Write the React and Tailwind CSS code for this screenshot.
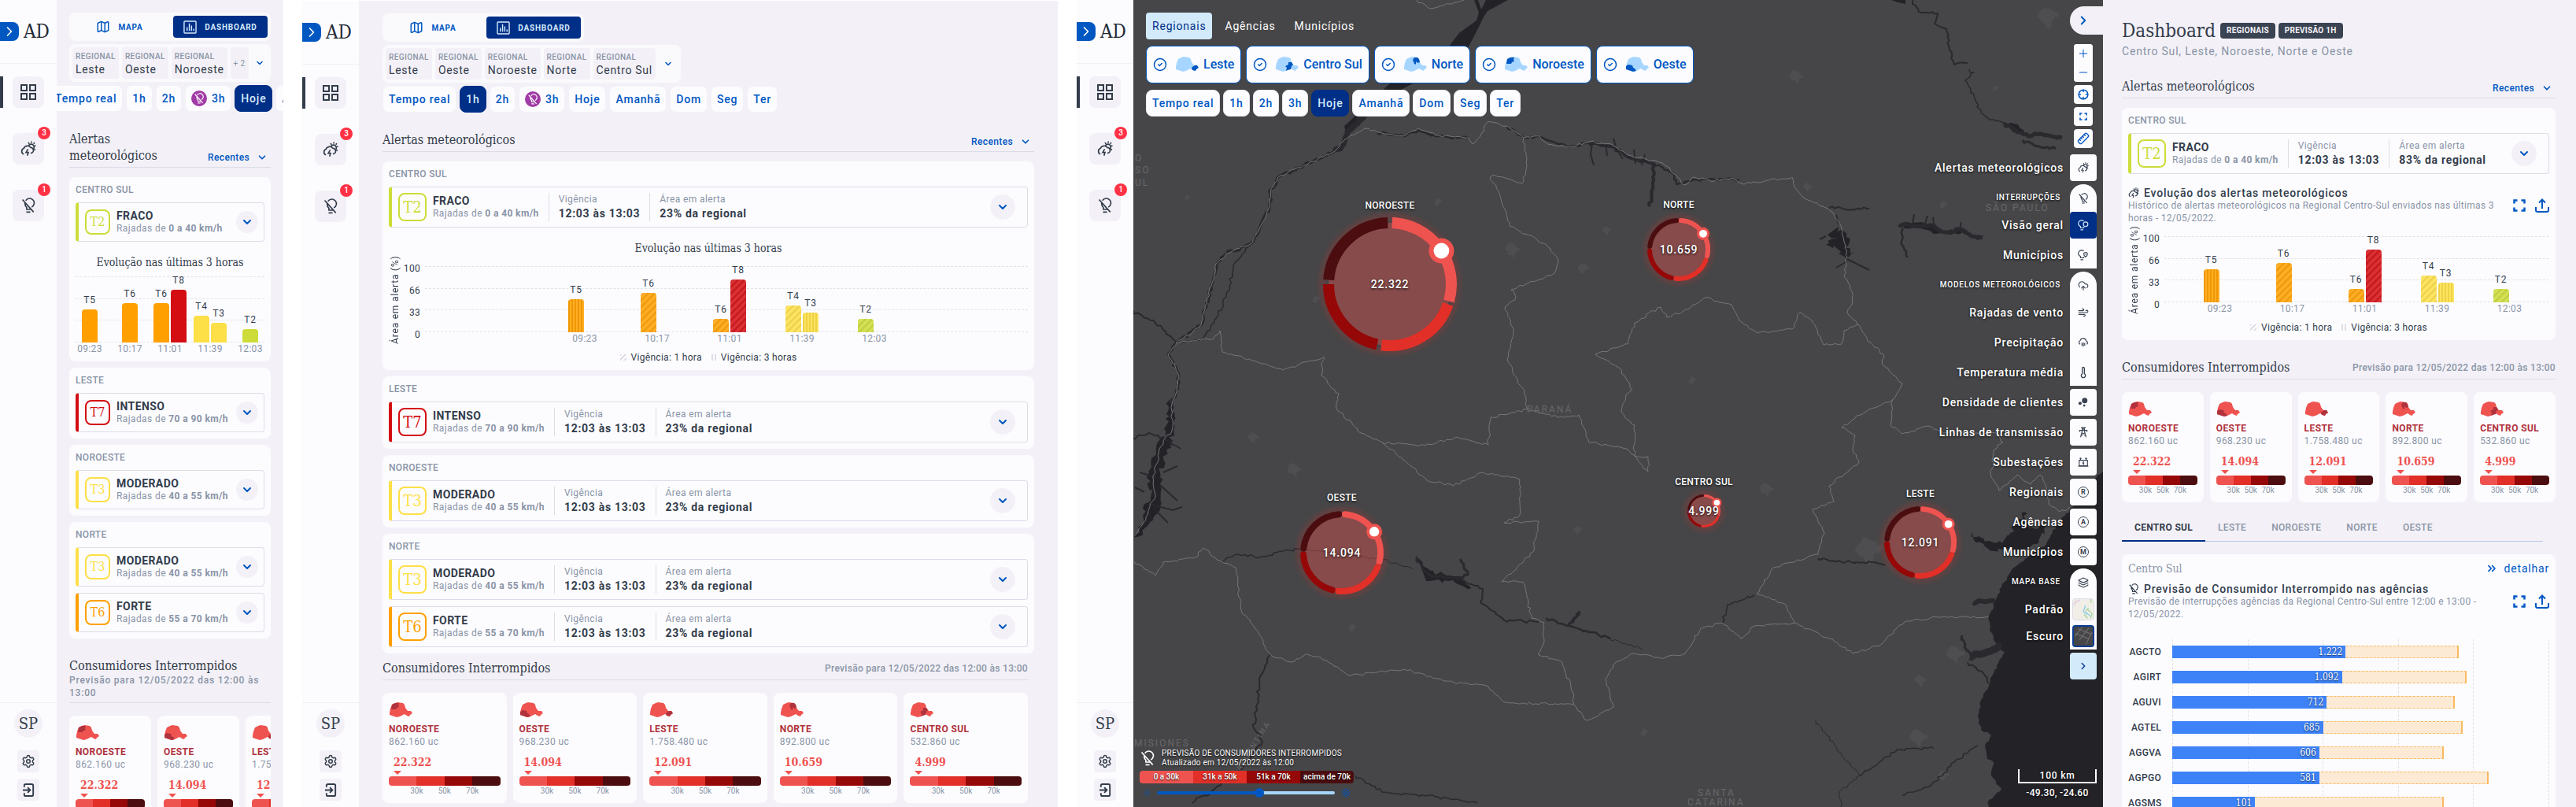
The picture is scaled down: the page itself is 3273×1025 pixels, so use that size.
import {
  ChevronDown,
  ChevronRight,
  ChevronsRight,
  CircleCheck,
  CloudUpload,
  Crosshair,
  Layers,
  Map,
  Minus,
  Plus,
  Ruler,
  Settings,
  Thermometer,
  Wind,
} from "lucide-react";

const slab = "font-['Roboto_Slab','DejaVu_Serif_Condensed','DejaVu_Serif',serif] tracking-normal";

const REGIONS = ["Leste", "Oeste", "Noroeste", "Norte", "Centro Sul"];
const PERIODS = ["Tempo real", "1h", "2h", "3h", "Hoje", "Amanhã", "Dom", "Seg", "Ter"];

const ALERTS = [
  { region: "CENTRO SUL", items: [{ level: "T2", name: "FRACO", wind: "0 a 40 km/h" }] },
  { region: "LESTE", items: [{ level: "T7", name: "INTENSO", wind: "70 a 90 km/h" }] },
  { region: "NOROESTE", items: [{ level: "T3", name: "MODERADO", wind: "40 a 55 km/h" }] },
  {
    region: "NORTE",
    items: [
      { level: "T3", name: "MODERADO", wind: "40 a 55 km/h" },
      { level: "T6", name: "FORTE", wind: "55 a 70 km/h" },
    ],
  },
];

const LEVELS = {
  T2: { box: "border-[#cddc39] text-[#cddc39]", edge: "border-l-[#cddc39]" },
  T3: { box: "border-[#fddf47] text-[#fddf47]", edge: "border-l-[#fddf47]" },
  T6: { box: "border-[#ffa000] text-[#ffa000]", edge: "border-l-[#ffa000]" },
  T7: { box: "border-[#d30d12] text-[#d30d12]", edge: "border-l-[#d30d12]" },
};

const BAR_COLORS = {
  T2: "bg-[#cddc39]",
  T3: "bg-[#fddf47]",
  T4: "bg-[#fddf47]",
  T5: "bg-[#ffa000]",
  T6: "bg-[#ffa000]",
  T8: "bg-[#d30d12]",
};

const diagonal = "bg-[repeating-linear-gradient(135deg,rgba(128,128,128,0.12)_0_2px,rgba(255,255,255,0.15)_3px_6px)]";
const vertical = "bg-[repeating-linear-gradient(90deg,rgba(0,0,0,0.06)_0_2px,rgba(255,255,255,0.15)_2px_4px)]";

const MOBILE_BARS = [
  { time: "09:23", bars: [{ level: "T5", height: 42 }] },
  { time: "10:17", bars: [{ level: "T6", height: 50 }] },
  { time: "11:01", bars: [{ level: "T6", height: 50 }, { level: "T8", height: 67 }] },
  { time: "11:39", bars: [{ level: "T4", height: 34 }, { level: "T3", height: 25 }] },
  { time: "12:03", bars: [{ level: "T2", height: 17 }] },
];

const WIDE_BARS = [
  { time: "09:23", bars: [{ level: "T5", height: 42, fill: vertical }] },
  { time: "10:17", bars: [{ level: "T6", height: 50, fill: diagonal }] },
  {
    time: "11:01",
    bars: [
      { level: "T6", height: 17, fill: diagonal },
      { level: "T8", height: 67, fill: diagonal },
    ],
  },
  {
    time: "11:39",
    bars: [
      { level: "T4", height: 34, fill: diagonal },
      { level: "T3", height: 25, fill: vertical },
    ],
  },
  { time: "12:03", bars: [{ level: "T2", height: 17, fill: diagonal }] },
];

const CONSUMERS = [
  { region: "Noroeste", total: "862.160", value: "22.322" },
  { region: "Oeste", total: "968.230", value: "14.094" },
  { region: "Leste", total: "1.758.480", value: "12.091" },
  { region: "Norte", total: "892.800", value: "10.659" },
  { region: "Centro Sul", total: "532.860", value: "4.999" },
];

const AGENCIES = [
  { name: "AGCTO", value: "1.222", bar: 46, limit: 76 },
  { name: "AGIRT", value: "1.092", bar: 45, limit: 78 },
  { name: "AGUVI", value: "712", bar: 41, limit: 75 },
  { name: "AGTEL", value: "685", bar: 40, limit: 77 },
  { name: "AGGVA", value: "606", bar: 39, limit: 72 },
  { name: "AGPGO", value: "581", bar: 39, limit: 84 },
  { name: "AGSMS", value: "101", bar: 22, limit: 72 },
];

/* ---------- icons ---------- */

function BulbOff({ className }) {
  return (
    <svg viewBox="0 0 24 24" className={className} fill="none" stroke="currentColor" strokeWidth="2" aria-hidden="true">
      <path d="M8 4.500A7 7 0 1 1 17 14.500M7 8c-.5 3 .3 5 2.500 7v3h6M3 3l17 19M9 22h6" />
    </svg>
  );
}

function Bulb({ className, pin }) {
  return (
    <svg viewBox="0 0 24 24" className={className} fill="none" stroke="currentColor" strokeWidth="2" aria-hidden="true">
      <path d="M13 3.200A7 7 0 1 0 6 15v3h7v-2M6 22h6" />
      {pin ? <path d="M17 6c3 0 4 2 4 4 0 3-4 6-4 6s-4-3-4-6c0-2 1-4 4-4zM17 9v2" /> : <circle cx="17" cy="10" r="5" />}
    </svg>
  );
}

function Storm({ className }) {
  return (
    <svg viewBox="0 0 24 24" className={className} fill="none" stroke="currentColor" strokeWidth="2" aria-hidden="true">
      <path d="M5 20a4.500 4.500 0 0 1 0-8.500A6 6 0 0 1 15.500 10a4 4 0 0 1 0 8.500" />
      <path d="M11.500 12.500 8.500 17.500H12l-1.500 5" />
      <path d="M12.500 7a4.500 4.500 0 1 1 6.500 6M17 .5V3M23.500 7.500H21M21.500 2.500 20 4.500M12 2.500l1.500 2M21 12.500l1.500 1.500" />
    </svg>
  );
}

function CloudRain({ className }) {
  return (
    <svg viewBox="0 0 24 24" className={className} fill="none" stroke="currentColor" strokeWidth="2" aria-hidden="true">
      <path d="M5 16a4.500 4.500 0 0 1 0-8 7 7 0 0 1 13.500 1 3.700 3.700 0 0 1 .5 7M9 13v6M12 12v9M15 13v6" />
    </svg>
  );
}

function Squares({ className }) {
  return (
    <svg viewBox="0 0 20 20" className={className} fill="none" stroke="currentColor" strokeWidth="2" aria-hidden="true">
      <path d="M1 1h7v7H1zM12 1h7v7h-7zM1 12h7v7H1zM12 12h7v7h-7z" />
    </svg>
  );
}

function ChartBox({ className }) {
  return (
    <svg viewBox="0 0 18 18" className={className} fill="none" stroke="currentColor" strokeWidth="1.500" aria-hidden="true">
      <rect x="1" y="1" width="16" height="16" rx="1" />
      <path d="M5 14V9M8 14V4M11 14V7M14 14v-3" />
    </svg>
  );
}

function Exit({ className }) {
  return (
    <svg viewBox="0 0 18 18" className={className} fill="none" stroke="currentColor" strokeWidth="2" aria-hidden="true">
      <path d="M3 5V3q0-2 2-2h8q2 0 2 2v12q0 2-2 2H5q-2 0-2-2v-2M1 9h9M7.500 5.500 11 9l-3.500 3.500" />
    </svg>
  );
}

function Expand({ className }) {
  return (
    <svg viewBox="0 0 16 16" className={className} fill="none" stroke="currentColor" strokeWidth="2.500" aria-hidden="true">
      <path d="M1.500 5.500v-4h4M10.500 1.500h4v4M14.500 10.500v4h-4M5.500 14.500h-4v-4" />
    </svg>
  );
}

function Share({ className }) {
  return (
    <svg viewBox="0 0 18 18" className={className} fill="none" stroke="currentColor" strokeWidth="2" aria-hidden="true">
      <path d="M1 11v4q0 2 2 2h12q2 0 2-2v-4M9 13V2M5 5.500 9 1.500l4 4" />
    </svg>
  );
}

function Pylon({ className }) {
  return (
    <svg viewBox="0 0 24 24" className={className} fill="none" stroke="currentColor" strokeWidth="2" aria-hidden="true">
      <path d="M7 2h10M3 8h18M4 8v3M20 8v3M10 2 9 12 6 23M14 2l1 10 3 11M9 13l7 6M15 13l-7 6M9 5h6" />
    </svg>
  );
}

function Substation({ className }) {
  return (
    <svg viewBox="0 0 24 24" className={className} fill="none" stroke="currentColor" strokeWidth="2" aria-hidden="true">
      <path d="M3 8h18v12H3zM1 21h22M6 8V2M18 8V2M4 4h4M16 4h4M12.500 10 11 14h2l-1 4" />
    </svg>
  );
}

function Bubbles({ className }) {
  return (
    <svg viewBox="0 0 24 24" className={className} fill="currentColor" aria-hidden="true">
      <circle cx="15" cy="8" r="6" />
      <circle cx="5" cy="14" r="3.500" />
      <circle cx="14" cy="19" r="2.500" />
    </svg>
  );
}

function Letter({ children }) {
  return (
    <span className="flex size-3.5 items-center justify-center rounded-full border border-[#3a4352] text-[9px] leading-none font-bold tracking-normal [text-shadow:none]">
      {children}
    </span>
  );
}

const STATE = "M1 13 2 8 4 3 8 1 11 0 18 1 20 3 21 7 24 11 28 11 30 14 27 16 26 18 23 17 20 15 16 17 14 18 10 19 4 17 1 16Z";
const PARTS = {
  Noroeste: "M4 3 8 1 13 1 12 4 13 6 10 7 9 9 3 9Z",
  Oeste: "M1 12 4 10 9 11 10 14 12 15 14 18 10 19 4 17 1 16Z",
  Leste: "M22 13 25 11 28 11 30 14 27 16 26 18 22 17 21 15Z",
  Norte: "M12 4 14 1 18 1 20 3 21 7 18 8 16 6 16 10 14 9Z",
  "Centro Sul": "M13 12 17 10 17 7 21 7 23 10 21 12 20 16 16 17 14 18 15 14Z",
};

function RegionShape({ region, blue = false }) {
  return (
    <svg viewBox="0 0 30 20" className="h-5 w-[30px]" aria-hidden="true">
      <path d={STATE} className={blue ? "fill-[#a6d6ff]" : "fill-[#ef5350]"} />
      <path d={PARTS[region]} className={blue ? "fill-[#0057c2]" : "fill-[#b0323c]"} />
    </svg>
  );
}

/* ---------- shared pieces ---------- */

function NavItem({ label, active, badge, children }) {
  return (
    <li className="relative flex w-full justify-center">
      {active && <span className="absolute top-0 left-0 h-10 w-1 bg-[#333c4b]" />}
      <button type="button" aria-label={label} className="relative flex size-10 items-center justify-center rounded-lg bg-[#f3f1f7]">
        {children}
        {badge && (
          <span className="absolute -top-2 -right-2 flex size-4 items-center justify-center rounded-full bg-[#ff3144] text-[10px] leading-none font-medium tracking-normal text-white">
            {badge}
          </span>
        )}
      </button>
    </li>
  );
}

function Sidebar() {
  return (
    <nav className="flex w-18 shrink-0 flex-col bg-[#fcfcff]">
      <div className="flex h-[81px] items-center gap-1.5 border-b border-[#efeff5]">
        <span className="flex h-6 w-6 items-center justify-center rounded-r-lg bg-[#0057c2] text-white">
          <ChevronRight className="size-5" strokeWidth={2} />
        </span>
        <span className={`${slab} text-2xl leading-6 text-[#232a35]`}>AD</span>
      </div>
      <ul className="mt-4 flex flex-col gap-8">
        <NavItem label="Painel" active>
          <Squares className="size-5" />
        </NavItem>
        <NavItem label="Alertas" badge="3">
          <Storm className="size-5" />
        </NavItem>
        <NavItem label="Interrupções" badge="1">
          <BulbOff className="size-5" />
        </NavItem>
      </ul>
      <div className="mt-auto flex flex-col items-center gap-2 border-t border-[#efeff5] pt-2 pb-2">
        <span className={`${slab} mb-2 flex size-9 items-center justify-center rounded-full bg-[#f3f1f7] text-xl`}>SP</span>
        <button type="button" aria-label="Configurações" className="flex size-7 items-center justify-center rounded bg-[#f3f1f7]">
          <Settings className="size-[18px]" />
        </button>
        <button type="button" aria-label="Sair" className="flex size-7 items-center justify-center rounded bg-[#f3f1f7]">
          <Exit className="size-[17px]" />
        </button>
      </div>
    </nav>
  );
}

function ViewToggle() {
  return (
    <div className="grid w-64 grid-cols-2 gap-2 rounded-lg bg-[#fafafd] p-1 text-[10px] font-bold">
      <button type="button" className="flex h-7 items-center justify-center gap-2.5 text-[#0057c2]">
        <Map className="size-[18px]" /> MAPA
      </button>
      <button type="button" className="flex h-7 items-center justify-center gap-2.5 rounded bg-[#002f87] text-[#d3eafa]">
        <ChartBox className="size-[17px]" /> DASHBOARD
      </button>
    </div>
  );
}

function RegionSelect({ regions, more }) {
  return (
    <button
      type="button"
      aria-label="Regionais"
      className={`mt-1 flex items-center gap-1 rounded-lg bg-[#fafafd] p-1 text-left tracking-wide ${more ? "w-64" : ""}`}
    >
      {regions.map((region) => (
        <span key={region} className="flex h-10 shrink-0 flex-col justify-center rounded bg-[#f3f1f7] px-1 whitespace-nowrap">
          <span className="text-[10px] leading-4 font-medium text-[#8a94a6]">REGIONAL</span>
          <span className="text-sm leading-4 tracking-wider">{region}</span>
        </span>
      ))}
      {more && (
        <span className="flex h-10 shrink-0 items-center rounded bg-[#f3f1f7] px-1 text-[10px] whitespace-nowrap text-[#8a94a6]">{more}</span>
      )}
      <ChevronDown className={`size-3 shrink-0 text-[#0057c2] ${more ? "mx-auto" : "mx-1.5"}`} strokeWidth={3} />
    </button>
  );
}

function Periods({ active, outlined, periods = PERIODS }) {
  return (
    <div className="flex gap-1">
      {periods.map((period) => (
        <button
          key={period}
          type="button"
          className={`flex h-[34px] shrink-0 items-center gap-1.5 rounded-lg border px-[7px] text-sm font-medium whitespace-nowrap ${
            period === active
              ? "border-[#002f87] bg-[#002f87] text-[#d3eafa]"
              : outlined
                ? "border-[#e8e8ee] bg-[#fcfcff] text-[#0057c2]"
                : "border-transparent bg-[#fcfcff] bg-clip-padding text-[#0057c2]"
          }`}
        >
          {period === "3h" && !outlined && (
            <span className="flex size-5 items-center justify-center rounded-full bg-[#a13ba5] text-white">
              <BulbOff className="size-3.5" />
            </span>
          )}
          {period}
        </button>
      ))}
    </div>
  );
}

function SortSelect() {
  return (
    <label className="flex items-center gap-1 pr-1 tracking-wide text-[#0057c2]">
      <select aria-label="Ordenar alertas" defaultValue="recentes" className="appearance-none bg-transparent pr-1 text-xs font-medium">
        <option value="recentes">Recentes</option>
      </select>
      <ChevronDown className="size-3.5" strokeWidth={3} />
    </label>
  );
}

function AlertsHeading({ stacked }) {
  return (
    <header className="mt-6 flex items-end justify-between border-b border-[#dcdce8] pb-1">
      <h2 className={`${slab} text-base leading-[21px] ${stacked ? "w-min" : ""}`}>Alertas meteorológicos</h2>
      <SortSelect />
    </header>
  );
}

function AlertRow({ alert, compact, area = "23%" }) {
  const level = LEVELS[alert.level];

  return (
    <article
      className={`flex items-center rounded border border-l-4 border-[#dcdce8] pl-2 tracking-wide whitespace-nowrap ${compact ? "h-[50px]" : "h-13"} ${level.edge}`}
    >
      <span
        className={`${slab} flex shrink-0 items-center justify-center rounded-lg border-2 ${compact ? "size-8 text-base" : "size-9 text-xl"} ${level.box}`}
      >
        {alert.level}
      </span>
      <div className="ml-2">
        <p className="text-sm leading-4 font-bold">{alert.name}</p>
        <p className="text-xs leading-4 text-[#8a94a6]">
          Rajadas de <b className="font-bold">{alert.wind}</b>
        </p>
      </div>
      {!compact && (
        <dl className="flex">
          <div className="ml-3 border-l border-[#dcdce8] pl-3">
            <dt className="text-xs leading-4 text-[#8a94a6]">Vigência</dt>
            <dd className="text-sm leading-5 font-bold tracking-wider">12:03 às 13:03</dd>
          </div>
          <div className="ml-3 border-l border-[#dcdce8] pl-3">
            <dt className="text-xs leading-4 text-[#8a94a6]">Área em alerta</dt>
            <dd className="text-sm leading-5 font-bold tracking-wider">{area} da regional</dd>
          </div>
        </dl>
      )}
      <button
        type="button"
        aria-label={`Detalhes ${alert.name}`}
        className={`ml-auto flex shrink-0 items-center justify-center rounded-full bg-[#f3f1f7] text-[#0057c2] ${compact ? "mr-[7px] size-7" : "mr-[15px] size-8"}`}
      >
        <ChevronDown className="size-4" strokeWidth={3} />
      </button>
    </article>
  );
}

function AlertCard({ group, compact, area, children }) {
  return (
    <section className="rounded-lg bg-[#fcfcff] p-2">
      <h3 className="mb-2 text-xs leading-4 font-medium tracking-wide text-[#8a94a6]">{group.region}</h3>
      <div className="flex flex-col gap-2">
        {group.items.map((alert) => (
          <AlertRow key={alert.name} alert={alert} compact={compact} area={area} />
        ))}
      </div>
      {children}
    </section>
  );
}

function GridLines() {
  return (
    <div className="col-start-1 row-start-1 flex h-[84px] flex-col justify-between">
      {[100, 66, 33, 0].map((line) => (
        <hr key={line} className="border-dashed border-[#e2e2e9]" />
      ))}
    </div>
  );
}

function BarGroup({ group, className }) {
  return (
    <div className={`flex flex-col ${className}`}>
      <div className="flex h-[84px] items-end gap-0.5">
        {group.bars.map((bar) => (
          <div key={bar.level} className="flex w-5 flex-col items-center">
            <span className="text-xs leading-6">{bar.level}</span>
            <div className={`w-5 rounded-t ${BAR_COLORS[bar.level]}`} style={{ height: bar.height }}>
              <div className={`h-full rounded-t ${bar.fill ?? ""}`} />
            </div>
          </div>
        ))}
      </div>
      <span className="self-center text-xs leading-4 tracking-wide text-[#8a94a6]">{group.time}</span>
    </div>
  );
}

function CompactChart() {
  return (
    <figure>
      <figcaption className={`${slab} mt-4 text-center text-sm leading-5`}>Evolução nas últimas 3 horas</figcaption>
      <div className="mt-2 grid">
        <GridLines />
        <div className="col-start-1 row-start-1 flex justify-between px-0.5">
          {MOBILE_BARS.map((group) => (
            <BarGroup key={group.time} group={group} className="w-8 items-center" />
          ))}
        </div>
      </div>
    </figure>
  );
}

function WideChart({ className }) {
  return (
    <figure>
      <div className="flex">
        <span className="h-[104px] w-4 rotate-180 text-center text-xs leading-4 whitespace-nowrap [writing-mode:vertical-rl]">
          Área em alerta (%)
        </span>
        <div className="flex h-[100px] w-6 flex-col justify-between text-right text-xs leading-4 tracking-wide">
          <span>100</span>
          <span>66</span>
          <span>33</span>
          <span>0</span>
        </div>
        <div className="mt-[5px] ml-1.5 grid flex-1">
          <GridLines />
          <div className={`col-start-1 row-start-1 flex justify-center gap-[50px] ${className}`}>
            {WIDE_BARS.map((group) => (
              <BarGroup key={group.time} group={group} className="w-[42px]" />
            ))}
          </div>
        </div>
      </div>
      <figcaption className="mt-2 flex items-center justify-center gap-3 text-xs leading-4 tracking-wide">
        <span className="flex items-center gap-1.5">
          <i className="size-2 bg-[repeating-linear-gradient(135deg,#dedee8_0_2px,transparent_2px_4px)]" />
          Vigência: 1 hora
        </span>
        <span className="flex items-center gap-1.5">
          <i className="h-2 w-1.5 border-x-2 border-[#dedee8]" />
          Vigência: 3 horas
        </span>
      </figcaption>
    </figure>
  );
}

function ConsumerCard({ item, className = "" }) {
  return (
    <article className={`rounded-lg bg-[#fcfcff] p-2 pt-3 tracking-wide ${className}`}>
      <RegionShape region={item.region} />
      <h3 className="mt-1.5 text-xs leading-4 font-bold text-[#b0323c] uppercase">{item.region}</h3>
      <p className="text-xs leading-4 text-[#8a94a6]">{item.total} uc</p>
      <p className={`${slab} mt-2 ml-1.5 text-sm leading-5 font-bold text-[#ef5350]`}>{item.value}</p>
      <svg viewBox="0 0 10 6" className="mb-0.5 ml-1.5 h-1.5 w-2.5 fill-[#ef5350]" aria-hidden="true">
        <path d="M0 1h10L5 6z" />
      </svg>
      <div className="grid h-3 grid-cols-4 overflow-hidden rounded">
        <i className="bg-[#ef5350]" />
        <i className="bg-[#e22f28]" />
        <i className="bg-[#960707]" />
        <i className="bg-[#4b0d0f]" />
      </div>
      <div className="flex justify-center text-center text-[10px] leading-3.5 tracking-normal text-[#8a94a6]">
        <span className="w-1/4">30k</span>
        <span className="w-1/4">50k</span>
        <span className="w-1/4">70k</span>
      </div>
    </article>
  );
}

/* ---------- screens ---------- */

function MobileScreen() {
  return (
    <div className="flex w-90 shrink-0 overflow-hidden">
      <Sidebar />
      <main className="min-w-0 flex-1 overflow-hidden bg-[#f3f1f7] px-4 pt-4">
        <ViewToggle />
        <RegionSelect regions={REGIONS.slice(0, 3)} more="+ 2" />
        <div className="-mx-4 mt-1 overflow-hidden">
          <div className="-ml-2.5">
            <Periods active="Hoje" periods={PERIODS.slice(0, 6)} />
          </div>
        </div>
        <AlertsHeading stacked />
        <div className="mt-3 flex flex-col gap-2">
          {ALERTS.map((group, i) => (
            <AlertCard key={group.region} group={group} compact>
              {i === 0 && <CompactChart />}
            </AlertCard>
          ))}
        </div>
        <header className="mt-6 border-b border-[#dcdce8] pb-1">
          <h2 className={`${slab} text-base leading-[21px]`}>Consumidores Interrompidos</h2>
          <p className="text-xs leading-4 font-medium text-[#8a94a6]">Previsão para 12/05/2022 das 12:00 às 13:00</p>
        </header>
        <div className="mt-4 flex gap-2 overflow-hidden">
          {CONSUMERS.slice(0, 3).map((item) => (
            <ConsumerCard key={item.region} item={item} className="w-26 shrink-0" />
          ))}
        </div>
      </main>
    </div>
  );
}

function ConsumersHeading({ className = "" }) {
  return (
    <header className={`flex items-center justify-between border-b border-[#dcdce8] pb-1 ${className}`}>
      <h2 className={`${slab} text-base leading-[21px]`}>Consumidores Interrompidos</h2>
      <p className="text-xs leading-4 font-medium tracking-wide text-[#8a94a6]">Previsão para 12/05/2022 das 12:00 às 13:00</p>
    </header>
  );
}

function TabletScreen() {
  return (
    <div className="flex w-240 shrink-0 overflow-hidden pt-px">
      <Sidebar />
      <main className="min-w-0 flex-1 overflow-hidden bg-[#f3f1f7] px-[30px] pt-4">
        <ViewToggle />
        <RegionSelect regions={REGIONS} />
        <div className="mt-1">
          <Periods active="1h" />
        </div>
        <AlertsHeading />
        <div className="mt-3 flex flex-col gap-2">
          {ALERTS.map((group, i) => (
            <AlertCard key={group.region} group={group}>
              {i === 0 && (
                <>
                  <h4 className={`${slab} mt-4 mb-2 text-center text-sm leading-5`}>Evolução nas últimas 3 horas</h4>
                  <WideChart className="pl-2" />
                </>
              )}
            </AlertCard>
          ))}
        </div>
        <div className="mr-2">
          <ConsumersHeading className="mt-2" />
          <div className="mt-4 grid grid-cols-5 gap-2">
            {CONSUMERS.map((item) => (
              <ConsumerCard key={item.region} item={item} />
            ))}
          </div>
        </div>
      </main>
    </div>
  );
}

/* ---------- map ---------- */

// breaks each straight stretch into short jittered steps, like a surveyed border
function rough(points, amp = 3) {
  const p = points.split(" ").map((pair) => pair.split(",").map(Number));
  let seed = 7;
  const rand = () => {
    seed = (seed * 16807) % 2147483647;
    return seed / 2147483647 - 0.5;
  };
  let d = `M${p[0][0]} ${p[0][1]}`;
  for (let i = 1; i < p.length; i++) {
    const [x0, y0] = p[i - 1];
    const [x1, y1] = p[i];
    const steps = Math.max(1, Math.round(Math.hypot(x1 - x0, y1 - y0) / 4));
    for (let s = 1; s < steps; s++) {
      const t = s / steps;
      d += `L${(x0 + (x1 - x0) * t + rand() * amp).toFixed(1)} ${(y0 + (y1 - y0) * t + rand() * amp).toFixed(1)}`;
    }
    d += `L${x1} ${y1}`;
  }
  return d;
}

const BORDERS = [
  "269,177 294,163 310,168 343,173 362,163 384,172 425,175 431,183 441,173 450,155 475,160 496,175 516,173 524,181 554,187 579,180 607,183 628,197 672,207 689,222 700,235 711,225 738,230 760,226 773,233 793,232 823,227 837,225 840,237 850,250 883,265 897,283 903,307 907,327 903,350 913,370 913,387 907,397 920,412 933,433 953,450 952,463 977,487 970,500 965,507 924,527 900,543 917,553 914,570 922,587 884,617 890,637 863,647 878,677 870,704 813,721 792,754 829,768 840,791",
  "269,177 256,192 223,207 187,223 175,240 173,263 160,290 149,310 118,322 107,333 99,363 91,393 86,413 55,435 44,450 58,477 54,500 49,513 49,547 35,567 25,607 28,630 11,667 1,681",
  "496,175 500,210 494,233 458,222 453,227 464,243 478,287 524,310 540,330 535,347 480,368 486,377 472,390 483,420 475,457 497,500 501,520 454,530 451,565 410,555 370,566 316,562",
  "55,435 102,430 110,420 113,447 151,458 190,470 242,453 239,477 261,500 258,518 289,550 316,562 343,584 373,610 407,617 444,600 491,609 491,654 471,664 515,662 508,701 468,739 495,739 506,785 522,791 522,815 514,831 545,841 556,872 560,895 576,915 610,898 600,862 613,841 637,830 671,836 701,830 721,798 748,791 772,811 789,795 840,791 884,811 914,830 951,818 970,798 980,790 1023,784 1087,783",
  "501,520 539,530 566,527 579,562 627,570 654,599 654,580 637,579 637,540 620,523 627,500 634,495 617,467 587,450 628,437 637,410 670,390 678,403 705,393 727,378 760,387 770,407 793,423 837,418 847,397 862,407 877,438 900,437 903,420 920,412",
  "1,713 28,731 38,714 79,708 89,696 106,711 130,721 137,775 153,795 174,831 201,841 221,831 238,835 275,858 343,850 397,865 451,872 471,892 559,895",
  "965,507 962,540 977,551 1010,541 1030,550 1097,550 1105,562 1093,572 1090,606 1100,623 1123,603 1140,615 1152,603 1160,620 1163,640 1177,650 1190,644",
  "360,0 378,11 420,0",
];

const RIVERS = [
  { points: "990,0 998,15 1022,17 1018,30 1033,37 1037,63 1043,82 1060,80", width: 2 },
  { points: "1062,88 1068,92 1057,102 1070,128 1077,143 1088,152 1107,156", width: 1.5 },
  { points: "1107,156 1120,165 1137,173 1153,170 1180,175", width: 5 },
  { points: "1130,178 1153,187 1172,189", width: 3 },
  { points: "294,148 272,167 267,183 256,192", width: 7 },
  { points: "256,192 223,207 187,223 175,240 173,263 160,290 149,310 118,322", width: 3.5 },
  { points: "118,322 107,333 99,363 91,393 86,413 55,435", width: 3 },
  { points: "149,310 128,335 120,370 108,400 88,432 60,434", width: 1.5 },
  { points: "55,435 44,450 58,477 54,500 49,513", width: 3 },
  { points: "310,168 343,173 362,165 384,173 425,176", width: 3 },
  { points: "475,160 496,175 516,174 554,187 579,181", width: 2.5 },
  { points: "579,181 607,186 628,199 662,209", width: 4 },
  { points: "662,209 660,232 656,262", width: 4 },
  { points: "662,207 685,220 690,234 711,228 770,228", width: 2.5 },
  { points: "883,265 888,262 905,266 935,265", width: 2 },
  { points: "973,285 1000,287 1012,286 1030,295 1050,291 1065,300 1079,302", width: 5 },
  { points: "978,290 976,310 984,327", width: 2.5 },
  { points: "211,697 240,700 316,711 356,723", width: 1 },
  { points: "113,713 130,704 160,708 190,700 211,697", width: 1.5 },
  { points: "360,708 370,725 378,732 410,734 425,730 415,710", width: 3 },
  { points: "410,734 444,748 441,764 471,788 515,790", width: 2 },
  { points: "525,785 552,795 567,777 552,795 606,811", width: 2.5 },
  { points: "606,811 647,825", width: 1 },
  { points: "789,756 755,768 748,791", width: 1.5 },
  { points: "870,709 900,714 938,714 955,718", width: 2 },
  { points: "867,915 904,965 924,985 897,1006 899,1025", width: 1 },
  { points: "924,985 970,952 1017,950", width: 1.5 },
  { points: "977,1010 1013,998 1043,968 1073,947", width: 1.5 },
  { points: "282,985 316,1006 383,1012 437,1020", width: 1.5 },
  { points: "1053,807 1058,825 1065,832", width: 3 },
  { points: "1063,834 1085,828 1103,821", width: 9 },
  { points: "1060,841 1080,855 1087,868", width: 2 },
  { points: "1067,765 1095,762", width: 6 },
  { points: "174,831 160,862 157,895 153,925 164,942 130,985 75,1020", width: 2 },
  { points: "0,395 28,410 55,435", width: 2 },
];

const TOWNS = [
  [1163, 22, 14], [843, 98, 9], [857, 238, 6], [1096, 112, 4], [1030, 260, 5], [388, 256, 5], [482, 318, 10], [572, 341, 7],
  [602, 293, 6], [69, 251, 4], [233, 380, 5], [205, 597, 9], [153, 556, 7], [805, 622, 9], [565, 674, 6], [279, 797, 5],
  [650, 930, 5], [1045, 832, 12], [1000, 865, 8], [998, 938, 12], [1030, 985, 7], [935, 700, 18], [711, 483, 5],
];

const MARKERS = [
  { name: "NOROESTE", value: "22.322", x: 326, y: 361, r: 85, ring: 14, knob: 16, label: 261 },
  { name: "NORTE", value: "10.659", x: 693, y: 317, r: 40, ring: 6, knob: 8, label: 260 },
  { name: "OESTE", value: "14.094", x: 265, y: 702, r: 53, ring: 8, knob: 10, label: 632 },
  { name: "CENTRO SUL", value: "4.999", x: 725, y: 649, r: 21, ring: 3, knob: 6, label: 612 },
  { name: "LESTE", value: "12.091", x: 1000, y: 689, r: 46, ring: 7, knob: 8, label: 627 },
];

const SEGMENTS = [
  { from: 2, to: 106, color: "#ef5350" },
  { from: 109, to: 188, color: "#e22f28" },
  { from: 192, to: 270, color: "#960707" },
  { from: 274, to: 358, color: "#4b0d0f" },
];

function polar(x, y, r, deg) {
  const a = ((deg - 90) * Math.PI) / 180;
  return [x + r * Math.cos(a), y + r * Math.sin(a)];
}

function Marker({ marker }) {
  const { name, value, x, y, r, ring, knob, label } = marker;
  const radius = r - ring / 2;
  const [kx, ky] = polar(x, y, radius, 57);
  const round = r < 80;
  const inset = round ? 2.5 : 0;

  return (
    <g>
      <circle cx={x} cy={y} r={r + 1} fill="none" stroke="#e22f28" strokeWidth="6" opacity="0.25" filter="url(#glow)" />
      <circle cx={x} cy={y} r={radius} fill="#ef5350" opacity="0.38" />
      {SEGMENTS.map((s) => {
        const [ax, ay] = polar(x, y, radius, s.from + inset);
        const [bx, by] = polar(x, y, radius, s.to - inset);
        return (
          <path
            key={s.from}
            d={`M${ax} ${ay}A${radius} ${radius} 0 0 1 ${bx} ${by}`}
            fill="none"
            stroke={s.color}
            strokeWidth={ring}
            strokeLinecap={round ? "round" : "butt"}
          />
        );
      })}
      <circle cx={kx} cy={ky} r={knob} fill="#ef5350" />
      <circle cx={kx} cy={ky} r={knob * 0.62} fill="#fff" />
      <text x={x} y={label + 4} textAnchor="middle" className="fill-white text-xs font-medium tracking-wide">
        {name}
      </text>
      <text x={x} y={y + 5} textAnchor="middle" className="fill-white text-sm font-medium">
        {value}
      </text>
    </g>
  );
}

function MapCanvas() {
  return (
    <svg viewBox="0 0 1232 1025" preserveAspectRatio="xMidYMid slice" className="absolute inset-0 size-full" role="img" aria-label="Mapa do Paraná">
      <defs>
        <filter id="glow" x="-30%" y="-30%" width="160%" height="160%">
          <feGaussianBlur stdDeviation="3" />
        </filter>
      </defs>
      <rect width="1232" height="1025" fill="#464648" />
      {TOWNS.map(([x, y, r]) => (
        <path key={`${x}-${y}`} d={rough(`${x - r},${y} ${x - r * 0.4},${y - r} ${x + r * 0.3},${y - r * 0.7} ${x + r},${y - r * 0.2} ${x + r * 0.3},${y + r * 0.3} ${x},${y + r} ${x - r},${y}`, 5)} fill="#4e4e50" />
      ))}
      <g fill="#232227">
        <path d={`${rough("1232,599 1220,609 1190,647 1173,667 1160,691 1133,710 1117,722 1103,746 1095,763 1088,780 1088,801 1097,818 1107,828 1093,855 1077,889 1073,910 1077,927 1090,934 1082,947 1085,964 1093,968 1090,985 1103,1002 1087,1016 1087,1025", 3)}H1232Z`} />
        <path d="M433 0l6 16-3 10-22 16-14 18-6 10h26l12-22 14-28 4-6 26-14H448l-6 12-4-12z" />
        <path d="M357 105 340 114 322 118 300 146 270 168 268 160 290 140 326 106z" />
        <path d={rough("1065,675 1072,682 1090,688 1103,690 1112,680 1122,662 1132,650 1136,668 1146,672 1160,668 1150,690 1140,694 1128,698 1118,700 1104,698 1080,696 1068,686", 8)} />
        <path d={rough("896,288 910,302 905,315 915,322 905,328 890,312 878,312 892,303 882,298", 8)} />
        <path d={rough("974,283 1000,282 1012,288 1030,294 1050,289 1060,293 1040,298 1020,297 1000,290 980,290", 4)} />
        <path d={rough("1107,156 1124,158 1135,172 1128,168 1118,168", 3)} />
        <path d="M963 0h18v5l-10-2z" />
        <path d={rough("49,505 52,540 44,570 34,600 36,640 18,668 2,686 12,655 22,632 20,600 30,568 42,540 44,510", 7)} />
        <path d={rough("360,705 370,720 382,728 412,732 430,748 420,745 400,738 372,738", 6)} />
      </g>
      <g fill="none" stroke="#2a292e" strokeLinejoin="round">
        {RIVERS.map((river) => (
          <path key={river.points} d={rough(river.points, 4)} strokeWidth={river.width} />
        ))}
        <path d={rough("0,557 20,550 44,560 60,570", 5)} strokeWidth="2" />
        <path
          d="M20 640l30 8 12-4M8 600l20 6M38 600l18-8M14 625l-12-6M34 616l22 20M30 650l14 14M583 182l-2 14 4 14M600 184l2 14M610 176l4 14 8 12M636 190l2 18M650 196l-4 14M990 284l2-12M1006 284l3-10M1018 290l-2-14M1050 292l2-10M905 328l30 15M880 300l-8 4M893 340l14-8M896 285l-3-12"
          strokeWidth="2"
        />
      </g>
      <g fill="none" stroke="#767679" strokeWidth="1" strokeLinejoin="round">
        {BORDERS.map((points) => (
          <path key={points.slice(0, 24)} d={rough(points, 3)} />
        ))}
      </g>
      <g className="fill-[#66666a] text-xs tracking-[2px]">
        <text x="500" y="524">PARANÁ</text>
        <text x="1083" y="268">SÃO PAULO</text>
        <text x="1" y="948">MISIONES</text>
        <text x="717" y="1011">SANTA</text>
        <text x="704" y="1023">CATARINA</text>
        <text x="2" y="205">O</text>
        <text x="2" y="220">SO</text>
        <text x="2" y="236">UL</text>
        <text transform="translate(136 980) rotate(-58)" fontSize="10">
          ARGENTINA
        </text>
      </g>
      <g className="[text-shadow:0_1px_3px_rgb(0_0_0/0.9)]">
        {MARKERS.map((marker) => (
          <Marker key={marker.name} marker={marker} />
        ))}
      </g>
    </svg>
  );
}

function ToolButton({ label, className = "", children }) {
  return (
    <button type="button" aria-label={label} className={`flex size-6 items-center justify-center rounded bg-[#fcfcff] text-[#0057c2] ${className}`}>
      {children}
    </button>
  );
}

function LayerButton({ label, active, className = "", children }) {
  return (
    <button
      type="button"
      aria-label={label}
      className={`flex size-[34px] items-center justify-center rounded ${active ? "bg-[#002f87] text-[#d3eafa]" : "bg-[#fcfcff]"} ${className}`}
    >
      {children}
    </button>
  );
}

function LayerGroup({ title, icon, items }) {
  return (
    <div className="flex gap-2">
      <div className="flex flex-col items-end gap-1">
        <span className="-mb-1 flex h-[35px] items-center pr-1 text-[10px] font-medium">{title}</span>
        {items.map((item) => (
          <span key={item.label} className="flex h-[34px] items-center">
            {item.label}
          </span>
        ))}
      </div>
      <div className="flex flex-col gap-1 rounded-t-full rounded-b bg-[#fcfcff] text-[#3a4352]">
        <span className="-mb-1 flex h-[35px] w-[34px] items-center justify-center">{icon}</span>
        {items.map((item) => (
          <LayerButton key={item.label} label={item.label} active={item.active}>
            {item.icon}
          </LayerButton>
        ))}
      </div>
    </div>
  );
}

const SINGLE_LAYERS = [
  { label: "Densidade de clientes", icon: <Bubbles className="size-3.5" /> },
  { label: "Linhas de transmissão", icon: <Pylon className="size-3.5" /> },
  { label: "Subestações", icon: <Substation className="size-3.5" /> },
  { label: "Regionais", icon: <Letter>R</Letter> },
  { label: "Agências", icon: <Letter>A</Letter> },
  { label: "Municípios", icon: <Letter>M</Letter> },
];

function SingleLayer({ label, children }) {
  return (
    <div className="flex items-center gap-2">
      <span>{label}</span>
      <LayerButton label={label} className="text-[#3a4352]">
        {children}
      </LayerButton>
    </div>
  );
}

function MapControls() {
  return (
    <div className="flex flex-col items-end pt-2 text-sm font-medium text-white [text-shadow:0_1px_3px_rgb(0_0_0/0.9)]">
      <button type="button" aria-label="Recolher painel" className="flex h-9 w-[42px] items-center rounded-l-full bg-[#f3f1f7] pl-2 text-[#0057c2]">
        <ChevronRight className="size-[18px]" strokeWidth={2.5} />
      </button>
      <div className="mt-3 mr-[13px] flex flex-col gap-1">
        <div className="flex flex-col rounded bg-[#fcfcff]">
          <ToolButton label="Aproximar">
            <Plus className="size-4" strokeWidth={1.5} />
          </ToolButton>
          <ToolButton label="Afastar">
            <Minus className="size-4" strokeWidth={1.5} />
          </ToolButton>
        </div>
        <ToolButton label="Centralizar">
          <Crosshair className="size-3.5" strokeWidth={2.5} />
        </ToolButton>
        <ToolButton label="Tela cheia">
          <Expand className="size-2.5" />
        </ToolButton>
        <ToolButton label="Medir">
          <Ruler className="size-4 -scale-x-100" />
        </ToolButton>
      </div>
      <div className="mt-2 mr-2 flex flex-col items-end gap-1">
        <SingleLayer label="Alertas meteorológicos">
          <Storm className="size-3.5" />
        </SingleLayer>
        <LayerGroup
          title="INTERRUPÇÕES"
          icon={<BulbOff className="size-3.5" />}
          items={[
            { label: "Visão geral", icon: <Bulb className="size-3.5" />, active: true },
            { label: "Municípios", icon: <Bulb className="size-3.5" pin /> },
          ]}
        />
        <LayerGroup
          title="MODELOS METEOROLÓGICOS"
          icon={<CloudUpload className="size-3.5" />}
          items={[
            { label: "Rajadas de vento", icon: <Wind className="size-3.5" /> },
            { label: "Precipitação", icon: <CloudRain className="size-3.5" /> },
            { label: "Temperatura média", icon: <Thermometer className="size-4" /> },
          ]}
        />
        {SINGLE_LAYERS.map((layer) => (
          <SingleLayer key={layer.label} label={layer.label}>
            {layer.icon}
          </SingleLayer>
        ))}
        <div className="flex gap-2">
          <div className="flex flex-col items-end">
            <span className="flex h-[35px] items-center pr-1 text-[10px]">MAPA BASE</span>
            <span className="mt-[3px] flex h-7 items-center">Padrão</span>
            <span className="mt-1.5 flex h-7 items-center">Escuro</span>
          </div>
          <div className="flex w-[34px] flex-col items-center rounded-t-full rounded-b bg-[#fcfcff] pb-[3px] text-[#3a4352]">
            <span className="flex h-[35px] items-center">
              <Layers className="size-3.5" />
            </span>
            <button type="button" aria-label="Mapa padrão" className="mt-[3px] size-7 overflow-hidden rounded border border-[#dcdce8] bg-[#f0eee6]">
              <svg viewBox="0 0 28 28" fill="none" strokeWidth="1.500" aria-hidden="true">
                <path d="M1 8 5 2M6 3l3-2" stroke="#dcc3df" />
                <path d="m17 9-3 8 5 4M17 18l8 6" stroke="#8ecbe6" />
                <path d="m24 0 1 5M20 14l6 6-2 6M15 21l5 5M17 17l4-5" stroke="#a8d8a0" />
              </svg>
            </button>
            <button type="button" aria-label="Mapa escuro" className="mt-1.5 size-7 overflow-hidden rounded border-2 border-[#0a3c94] bg-[#464648]">
              <svg viewBox="0 0 28 28" fill="none" stroke="#6b6b6e" strokeWidth="1.500" aria-hidden="true">
                <path d="M2 14 12 1M8 20 22 2M18 26 27 8M2 10l20 8M6 3l20 8" />
              </svg>
            </button>
          </div>
        </div>
        <LayerButton label="Ocultar rótulos" className="bg-[#d3eafa]! text-[#0a3c94]">
          <ChevronRight className="size-3.5" strokeWidth={2.5} />
        </LayerButton>
      </div>
      <div className="mt-auto mr-2 flex w-25 flex-col items-center pb-2.5 text-xs">
        <span className="flex h-[18px] w-full items-center justify-center border-2 border-t-0 border-white">100 km</span>
        <span className="mt-1 leading-4 tracking-wide whitespace-nowrap">-49.30, -24.60</span>
      </div>
    </div>
  );
}

function MapLegend() {
  return (
    <div className="ml-2 w-68 pb-3 text-[10px] leading-3 tracking-wide text-white [text-shadow:0_1px_2px_rgb(0_0_0/0.9)]">
      <div className="flex items-center gap-2">
        <BulbOff className="size-5" />
        <p className="whitespace-nowrap">
          PREVISÃO DE CONSUMIDORES INTERROMPIDOS
          <br />
          Atualizado em 12/05/2022 às 12:00
        </p>
      </div>
      <div className="mt-1 grid h-4 grid-cols-4 overflow-hidden rounded text-center leading-4 font-medium tracking-normal whitespace-nowrap">
        <span className="bg-[#ef5350]">0 a 30k</span>
        <span className="bg-[#e22f28]">31k a 50k</span>
        <span className="bg-[#960707]">51k a 70k</span>
        <span className="bg-[#4b0d0f]">acima de 70k</span>
      </div>
      <label className="mt-1.5 flex h-3 items-center gap-2 pr-1 pl-1 text-[#0057c2]">
        <Settings className="size-2.5 opacity-60" />
        <input
          type="range"
          aria-label="Opacidade"
          defaultValue="58"
          className="h-1 flex-1 appearance-none rounded bg-[linear-gradient(90deg,#0057c2_58%,#a6d6ff_58%)] [&::-webkit-slider-thumb]:size-3 [&::-webkit-slider-thumb]:appearance-none [&::-webkit-slider-thumb]:rounded-full [&::-webkit-slider-thumb]:bg-[#0057c2]"
        />
        <Settings className="size-3" />
      </label>
    </div>
  );
}

function MapSection() {
  return (
    <section className="relative flex min-w-0 flex-1 overflow-hidden">
      <MapCanvas />
      <div className="relative flex flex-1 flex-col justify-between">
        <div className="flex flex-col items-start gap-2 pt-4 pl-4">
          <div className="flex text-sm leading-[34px] text-white [text-shadow:0_1px_3px_rgb(0_0_0/0.9)]">
            <button type="button" className="rounded bg-[#d3eafa] px-2 text-[#002f87] [text-shadow:none]">
              Regionais
            </button>
            <button type="button" className="px-4">
              Agências
            </button>
            <button type="button" className="px-2">
              Municípios
            </button>
          </div>
          <div className="flex gap-1.5">
            {["Leste", "Centro Sul", "Norte", "Noroeste", "Oeste"].map((region) => (
              <button
                key={region}
                type="button"
                aria-pressed="true"
                className="flex h-12 items-center rounded-lg border border-[#0057c2] bg-[#fcfcff] px-2 font-medium tracking-normal text-[#0057c2]"
              >
                <CircleCheck className="mr-2.5 size-[18px]" />
                <RegionShape region={region} blue />
                <span className="ml-1.5">{region}</span>
              </button>
            ))}
          </div>
          <Periods active="Hoje" outlined />
        </div>
        <MapLegend />
      </div>
      <div className="relative flex">
        <MapControls />
      </div>
    </section>
  );
}

function CardActions() {
  return (
    <div className="flex items-center gap-3 text-[#0057c2]">
      <button type="button" aria-label="Expandir">
        <Expand className="size-4" />
      </button>
      <button type="button" aria-label="Compartilhar">
        <Share className="size-[18px]" />
      </button>
    </div>
  );
}

function ChartHeading({ icon, title, text }) {
  return (
    <div className="flex items-center justify-between gap-5">
      <div>
        <h4 className="flex items-center gap-1.5 text-sm leading-4 font-medium">
          {icon} {title}
        </h4>
        <p className="text-xs leading-4 tracking-wide text-[#8a94a6]">{text}</p>
      </div>
      <CardActions />
    </div>
  );
}

function AgencyChart() {
  return (
    <div className="mt-6 flex">
      <ul className="w-[42px] shrink-0 text-right text-xs font-medium tracking-wide">
        {AGENCIES.map((agency) => (
          <li key={agency.name} className="leading-8">
            {agency.name}
          </li>
        ))}
      </ul>
      <div className="ml-3.5 grid flex-1">
        <div className="col-start-1 row-start-1 flex justify-between">
          {[0, 1, 2, 3, 4, 5].map((line) => (
            <i key={line} className="border-l border-dashed border-[#dedee6]" />
          ))}
        </div>
        <div className="col-start-1 row-start-1">
          {AGENCIES.map((agency) => (
            <div key={agency.name} className="grid h-8 items-center">
              <div
                className="col-start-1 row-start-1 h-4 border-y border-r-2 border-dashed border-[#fbb85f] bg-[#fdead5] [border-right-style:solid]"
                style={{ width: `${agency.limit}%` }}
              />
              <div
                className={`${slab} col-start-1 row-start-1 h-4 bg-[#3d82f7] pr-1 text-right text-xs leading-4 text-white [text-shadow:0_1px_2px_rgb(0_0_0/0.7)]`}
                style={{ width: `${agency.bar}%` }}
              >
                {agency.value}
              </div>
            </div>
          ))}
        </div>
      </div>
    </div>
  );
}

function DashboardPanel() {
  return (
    <aside className="w-[601px] shrink-0 overflow-hidden bg-[#f3f1f7] pt-[23px] pr-[26px] pl-6">
      <header className="flex items-center gap-1">
        <h1 className={`${slab} text-2xl leading-8`}>Dashboard</h1>
        <span className="ml-0.5 rounded bg-[#3a4352] px-2 text-[10px] leading-5 font-bold tracking-wide text-[#f3f1f7]">REGIONAIS</span>
        <span className="rounded bg-[#3a4352] px-2 text-[10px] leading-5 font-bold tracking-wide text-[#f3f1f7]">PREVISÃO 1H</span>
      </header>
      <p className="text-sm leading-5 text-[#8a94a6]">Centro Sul, Leste, Noroeste, Norte e Oeste</p>
      <AlertsHeading />
      <div className="mt-3">
        <AlertCard group={ALERTS[0]} area="83%">
          <div className="mt-4 mb-2.5">
            <ChartHeading
              icon={<Storm className="size-3.5" />}
              title="Evolução dos alertas meteorológicos"
              text="Histórico de alertas meteorológicos na Regional Centro-Sul enviados nas últimas 3 horas - 12/05/2022."
            />
          </div>
          <WideChart className="pl-5" />
        </AlertCard>
      </div>
      <ConsumersHeading className="mt-6" />
      <div className="mt-4 grid grid-cols-5 gap-2">
        {CONSUMERS.map((item) => (
          <ConsumerCard key={item.region} item={item} />
        ))}
      </div>
      <div className="mt-4 mr-4 flex border-b border-[#b8c8e2] text-xs leading-4 font-medium tracking-wide text-[#8a94a6]">
        {["CENTRO SUL", "LESTE", "NOROESTE", "NORTE", "OESTE"].map((tab, i) => (
          <button
            key={tab}
            type="button"
            className={`-mb-px border-b-2 px-4 py-2 ${i === 0 ? "border-[#002f87] font-bold text-[#333c4b]" : "border-transparent"}`}
          >
            {tab}
          </button>
        ))}
      </div>
      <section className="mt-4 rounded-t-lg bg-[#fcfcff] p-2">
        <div className="mb-2 flex items-center justify-between">
          <h3 className={`${slab} text-sm leading-5 text-[#8a94a6]`}>Centro Sul</h3>
          <a href="#detalhar" className="flex items-center gap-2 text-sm leading-5 text-[#0057c2]">
            <ChevronsRight className="size-4" strokeWidth={2.5} /> detalhar
          </a>
        </div>
        <ChartHeading
          icon={<BulbOff className="size-3.5" />}
          title="Previsão de Consumidor Interrompido nas agências"
          text="Previsão de interrupções agências da Regional Centro-Sul entre 12:00 e 13:00 - 12/05/2022."
        />
        <AgencyChart />
      </section>
    </aside>
  );
}

function App() {
  return (
    <div className="flex h-screen gap-6 overflow-hidden bg-white font-[Roboto,sans-serif] tracking-wider text-[#333c4b]">
      <MobileScreen />
      <TabletScreen />
      <div className="flex min-w-0 flex-1 overflow-hidden">
        <Sidebar />
        <MapSection />
        <DashboardPanel />
      </div>
    </div>
  );
}

export default App;
